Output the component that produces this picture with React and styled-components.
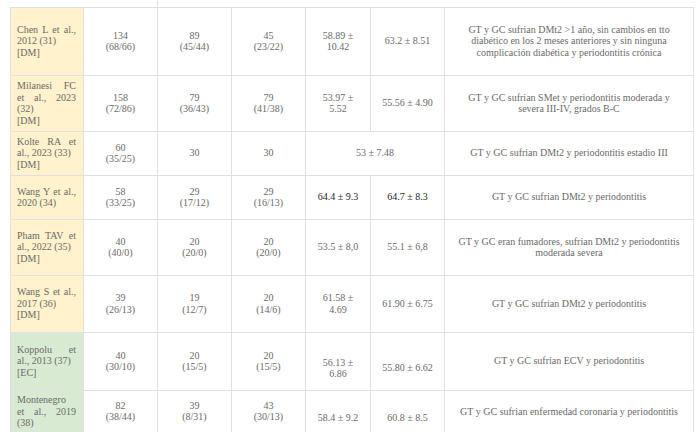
import React from 'react';
import styled, { createGlobalStyle } from 'styled-components';

const GlobalStyle = createGlobalStyle`
  body {
    margin: 0;
    background: #fff;
  }
`;

const widths = [73, 74, 74, 74, 65, 74, 249];

const rows = [
  {
    h: 68, tone: 'yellow',
    author: [['Chen L et al.,', true], ['2012 (31)'], ['[DM]']],
    total: ['134', '(68/66)'], gt: ['89', '(45/44)'], gc: ['45', '(23/22)'],
    ageGT: { text: ['58.89 ±', '10.42'] }, ageGC: { text: ['63.2 ± 8.51'] },
    note: ['GT y GC sufrian DMt2 >1 año, sin cambios en tto', 'diabético en los 2 meses anteriores y sin ninguna', 'complicación diabética y periodontitis crónica'],
  },
  {
    h: 56, tone: 'yellow',
    author: [['Milanesi FC', true], ['et al., 2023', true], ['(32)'], ['[DM]']],
    total: ['158', '(72/86)'], gt: ['79', '(36/43)'], gc: ['79', '(41/38)'],
    ageGT: { text: ['53.97 ±', '5.52'] }, ageGC: { text: ['55.56 ± 4.90'] },
    note: ['GT y GC sufrian SMet y periodontitis moderada y', 'severa III-IV, grados B-C'],
  },
  {
    h: 44, tone: 'yellow',
    author: [['Kolte RA et', true], ['al., 2023 (33)'], ['[DM]']],
    total: ['60', '(35/25)'], gt: ['30'], gc: ['30'],
    ageBoth: ['53 ± 7.48'],
    note: ['GT y GC sufrian DMt2 y periodontitis estadio III'],
  },
  {
    h: 44, tone: 'yellow',
    author: [['Wang Y et al.,', true], ['2020 (34)']],
    total: ['58', '(33/25)'], gt: ['29', '(17/12)'], gc: ['29', '(16/13)'],
    ageGT: { text: ['64.4 ± 9.3'], strong: true }, ageGC: { text: ['64.7 ± 8.3'], strong: true },
    note: ['GT y GC sufrian DMt2 y periodontitis'],
  },
  {
    h: 56, tone: 'yellow',
    author: [['Pham TAV et', true], ['al., 2022 (35)'], ['[DM]']],
    total: ['40', '(40/0)'], gt: ['20', '(20/0)'], gc: ['20', '(20/0)'],
    ageGT: { text: ['53.5 ± 8,0'] }, ageGC: { text: ['55.1 ± 6,8'] },
    note: ['GT y GC eran fumadores, sufrian DMt2 y periodontitis', 'moderada severa'],
  },
  {
    h: 57, tone: 'yellow',
    author: [['Wang S et al.,', true], ['2017 (36)'], ['[DM]']],
    total: ['39', '(26/13)'], gt: ['19', '(12/7)'], gc: ['20', '(14/6)'],
    ageGT: { text: ['61.58 ±', '4.69'] }, ageGC: { text: ['61.90 ± 6.75'] },
    note: ['GT y GC sufrian DMt2 y periodontitis'],
  },
  {
    h: 58, tone: 'green',
    author: [['Koppolu et', true], ['al., 2013 (37)'], ['[EC]']],
    total: ['40', '(30/10)'], gt: ['20', '(15/5)'], gc: ['20', '(15/5)'],
    ageGT: { text: ['56.13 ±', '6.86'], shift: 7 }, ageGC: { text: ['55.80 ± 6.62'], shift: 7 },
    note: ['GT y GC sufrian ECV y periodontitis'],
  },
  {
    h: 42, tone: 'green',
    author: [['Montenegro'], ['et al., 2019', true], ['(38)']],
    total: ['82', '(38/44)'], gt: ['39', '(8/31)'], gc: ['43', '(30/13)'],
    ageGT: { text: ['58.4 ± 9.2'], shift: 6 }, ageGC: { text: ['60.8 ± 8.5'], shift: 6 },
    note: ['GT y GC sufrian enfermedad coronaria y periodontitis'],
  },
];

const tones = {
  yellow: '#fff2cc',
  green: '#d9ead3',
};

const Frame = styled.div`
  padding-left: 10px;
  font-family: "Liberation Serif", "Times New Roman", serif;
  font-size: 10px;
  line-height: 11.5px;
  color: #6a6a6a;
`;

const Table = styled.table`
  border-collapse: collapse;
  table-layout: fixed;
  width: 683px;
`;

const Col = styled.col`
  width: ${p => p.$w}px;
`;

const Row = styled.tr`
  height: ${p => p.$h}px;
`;

const Stub = styled.td`
  padding: 0;
  border: none;
  border-right: ${p => (p.$edge ? '1px solid #e0e0e0' : 'none')};
`;

const Cell = styled.td`
  border: 1px solid #e0e0e0;
  border-bottom: ${p => (p.$open ? 'none' : '1px solid #e0e0e0')};
  padding: ${p => 3 + Math.max(0, (p.$shift || 0) * 2)}px 6px
    ${p => 3 + Math.max(0, -(p.$shift || 0) * 2)}px;
  text-align: center;
  vertical-align: middle;
  white-space: nowrap;
  color: ${p => (p.$strong ? '#1e1e1e' : 'inherit')};
`;

const AuthorCell = styled(Cell)`
  background: ${p => tones[p.$tone]};
  text-align: left;
  padding-left: 6px;
  padding-right: 7px;
`;

const Line = styled.span`
  display: block;
  text-align: ${p => (p.$fill ? 'justify' : 'left')};
  text-align-last: ${p => (p.$fill ? 'justify' : 'left')};
`;

const Stack = ({ lines }) =>
  lines.map((l, i) => (
    <React.Fragment key={i}>
      {i > 0 && <br />}
      {l}
    </React.Fragment>
  ));

const App = () => (
  <>
    <GlobalStyle />
    <Frame>
      <Table>
        <colgroup>
          {widths.map((w, i) => <Col key={i} $w={w} />)}
        </colgroup>
        <tbody>
          <Row $h={7}>
            <Stub colSpan={2} $edge />
            <Stub colSpan={5} />
          </Row>
          {rows.map((r, i) => {
            const open = i === rows.length - 1;
            return (
              <Row key={i} $h={r.h}>
                <AuthorCell $tone={r.tone} $open={open}>
                  {r.author.map(([text, fill], j) => (
                    <Line key={j} $fill={fill}>{text}</Line>
                  ))}
                </AuthorCell>
                <Cell $open={open}><Stack lines={r.total} /></Cell>
                <Cell $open={open}><Stack lines={r.gt} /></Cell>
                <Cell $open={open}><Stack lines={r.gc} /></Cell>
                {r.ageBoth ? (
                  <Cell colSpan={2}><Stack lines={r.ageBoth} /></Cell>
                ) : (
                  <>
                    <Cell $open={open} $shift={r.ageGT.shift} $strong={r.ageGT.strong}>
                      <Stack lines={r.ageGT.text} />
                    </Cell>
                    <Cell $open={open} $shift={r.ageGC.shift} $strong={r.ageGC.strong}>
                      <Stack lines={r.ageGC.text} />
                    </Cell>
                  </>
                )}
                <Cell $open={open}><Stack lines={r.note} /></Cell>
              </Row>
            );
          })}
        </tbody>
      </Table>
    </Frame>
  </>
);

export default App;
